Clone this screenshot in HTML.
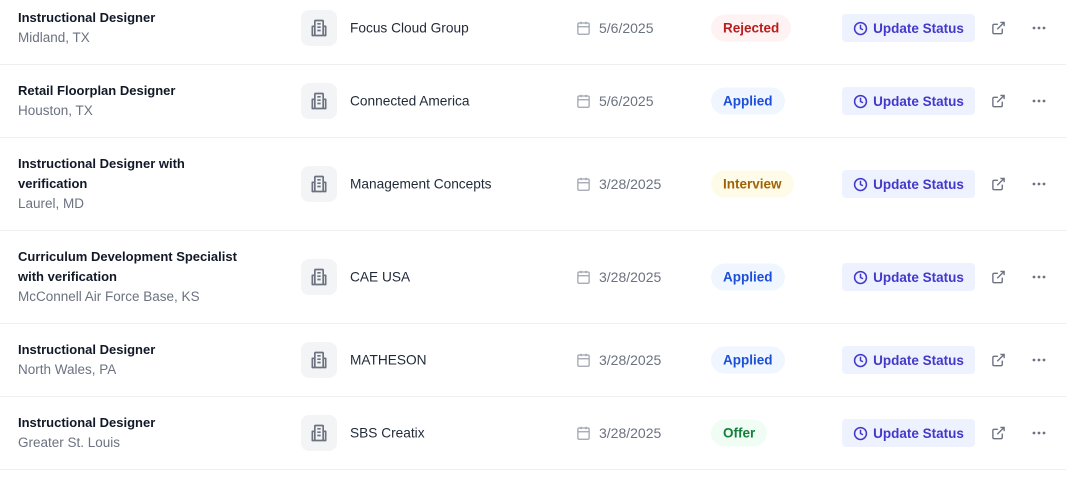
<!DOCTYPE html>
<html><head><meta charset="utf-8"><style>
*{margin:0;padding:0;box-sizing:border-box}
body{width:1066px;height:481px;background:#fff;font-family:"Liberation Sans",sans-serif;position:relative;overflow:hidden}
.row{position:absolute;left:0;width:1066px;border-bottom:1px solid #eeeff1}
.c{position:absolute;top:50%;transform:translateY(-50%)}
.t{left:18px;width:228px;font-size:13px;line-height:20px;color:#111827;font-weight:bold}
.t span{display:block;font-weight:normal;color:#6b7280;font-size:13.5px}
.ic{left:301px;width:36px;height:36px;border-radius:8px;background:#f3f4f6;display:flex;align-items:center;justify-content:center}
.co{left:350px;font-size:13.7px;color:#1f2937}
.cal{left:576px;width:15px;height:15px}
.dt{left:599px;font-size:14px;color:#6b7280}
.b{left:711px;height:27px;line-height:27px;padding:0 12px;border-radius:14px;font-size:13.5px;font-weight:bold}
.rej{background:#fef2f2;color:#b91c1c}.app{background:#eff6ff;color:#1d4ed8}.int{background:#fefce8;color:#a16207}.off{background:#f0fdf4;color:#15803d}
.btn{left:842px;width:133px;height:28px;background:#eef2ff;color:#4338ca;border-radius:4px;font-size:13.5px;font-weight:bold;display:flex;align-items:center;justify-content:center;gap:5px}
.ex{left:991px;width:15px;height:15px}
.dots{left:1032px;width:14px;height:4px}
</style></head><body>
<script>
const rows=[
[-8,73,"Instructional Designer","Midland, TX","Focus Cloud Group","5/6/2025","Rejected","rej"],
[65,73,"Retail Floorplan Designer","Houston, TX","Connected America","5/6/2025","Applied","app"],
[138,93,"Instructional Designer with verification","Laurel, MD","Management Concepts","3/28/2025","Interview","int"],
[231,93,"Curriculum Development Specialist with verification","McConnell Air Force Base, KS","CAE USA","3/28/2025","Applied","app"],
[324,73,"Instructional Designer","North Wales, PA","MATHESON","3/28/2025","Applied","app"],
[397,73,"Instructional Designer","Greater St. Louis","SBS Creatix","3/28/2025","Offer","off"]];
let h="";
for(const r of rows){h+=`<div class="row" style="top:${r[0]}px;height:${r[1]}px">
<div class="c t">${r[2]}<span>${r[3]}</span></div>
<div class="c ic"><svg width="20" height="20" viewBox="0 0 24 24" fill="none" stroke="#6b7280" stroke-width="2" stroke-linejoin="round"><rect x="7" y="3" width="10" height="18" rx="1"/><path d="M7 10H4v11h3M17 10h3v11h-3M10 7h4M10 11h4M10 15h4"/></svg></div>
<div class="c co">${r[4]}</div>
<svg class="c cal" viewBox="0 0 24 24" fill="none" stroke="#9ca3af" stroke-width="2"><rect x="3" y="4" width="18" height="18" rx="2"/><path d="M16 2v4M8 2v4M3 10h18"/></svg>
<div class="c dt">${r[5]}</div>
<div class="c b ${r[7]}">${r[6]}</div>
<div class="c btn"><svg width="15" height="15" viewBox="0 0 24 24" fill="none" stroke="#4338ca" stroke-width="2.4"><circle cx="12" cy="12" r="9.5"/><path d="M12 6v6l4 2"/></svg>Update Status</div>
<svg class="c ex" viewBox="0 0 24 24" fill="none" stroke="#6b7280" stroke-width="2.2"><path d="M18 13v6a2 2 0 0 1-2 2H5a2 2 0 0 1-2-2V8a2 2 0 0 1 2-2h6M15 3h6v6M10 14L21 3"/></svg>
<svg class="c dots" viewBox="0 0 14 4" fill="#6b7280"><circle cx="2" cy="2" r="1.4"/><circle cx="7" cy="2" r="1.4"/><circle cx="12" cy="2" r="1.4"/></svg>
</div>`}
document.write(h);
</script>
</body></html>
